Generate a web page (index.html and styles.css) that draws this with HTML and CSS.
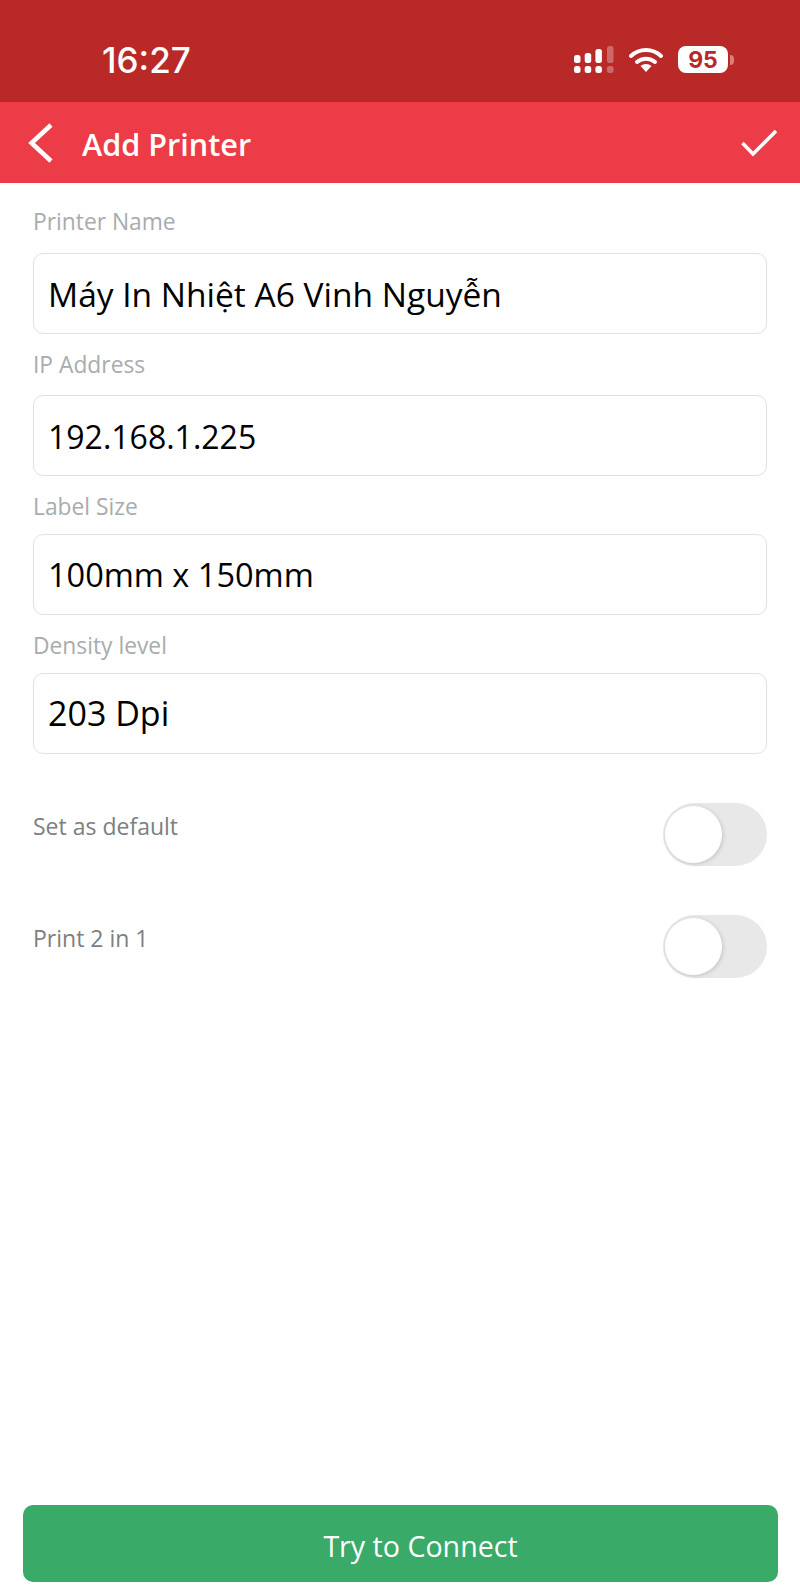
FILE: index.html
```html
<!DOCTYPE html>
<html lang="en">
<head>
    <meta charset="UTF-8">
    <meta name="viewport" content="width=device-width, initial-scale=1.0">
    <title>Add Printer</title>
    <link rel="stylesheet" href="styles.css">
</head>
<body>

    <div class="status-bar">
        <span class="clock">16:27</span>
        <div class="status-icons">
            <svg class="signal" width="40" height="27" viewBox="0 0 40 27">
                <g fill="#fff">
                    <rect x="0" y="9" width="6.500" height="8" rx="2.500"/>
                    <rect x="10.700" y="7" width="6.500" height="10" rx="2.500"/>
                    <rect x="21.400" y="3" width="6.500" height="14" rx="2.500"/>
                    <rect x="0" y="20" width="6.500" height="7" rx="2.500"/>
                    <rect x="10.700" y="20" width="6.500" height="7" rx="2.500"/>
                    <rect x="21.400" y="20" width="6.500" height="7" rx="2.500"/>
                </g>
                <g fill="#fff" opacity="0.3">
                    <rect x="33" y="0" width="6.500" height="17" rx="2.500"/>
                    <rect x="33" y="20" width="6.500" height="7" rx="2.500"/>
                </g>
            </svg>
            <svg class="wifi" width="34" height="26" viewBox="0 0 34 26">
                <path d="M2 9 C10.500 1 23.500 1 32 9" fill="none" stroke="#fff" stroke-width="4" stroke-linecap="round"/>
                <path d="M8 15 C13 10.500 21 10.500 26 15" fill="none" stroke="#fff" stroke-width="4" stroke-linecap="round"/>
                <path d="M11.500 19 C14.500 16.300 19.500 16.300 22.500 19 L17 25 Z" fill="#fff"/>
            </svg>
            <div class="battery">
                <span class="battery-level">95</span>
                <span class="battery-cap"></span>
            </div>
        </div>
    </div>

    <header class="app-bar">
        <svg class="back" width="25" height="40" viewBox="0 0 25 40">
            <path d="M23 2 L3.500 20 L23 38" fill="none" stroke="#fff" stroke-width="4.500"/>
        </svg>
        <h1>Add Printer</h1>
        <svg class="check" width="36" height="28" viewBox="0 0 36 28">
            <path d="M1.500 14 L12 25 L35 2" fill="none" stroke="#fff" stroke-width="3.500"/>
        </svg>
    </header>

    <main class="form">
        <div class="field first">
            <label>Printer Name</label>
            <div class="input">Máy In Nhiệt A6 Vinh Nguyễn</div>
        </div>
        <div class="field second">
            <label>IP Address</label>
            <div class="input numeric">192.168.1.225</div>
        </div>
        <div class="field">
            <label>Label Size</label>
            <div class="input size">100mm x 150mm</div>
        </div>
        <div class="field">
            <label>Density level</label>
            <div class="input density">203 Dpi</div>
        </div>

        <div class="option">
            <span>Set as default</span>
            <div class="toggle"><div class="knob"></div></div>
        </div>
        <div class="option">
            <span>Print 2 in 1</span>
            <div class="toggle"><div class="knob"></div></div>
        </div>
    </main>

    <footer class="actions">
        <button class="connect">Try to Connect</button>
    </footer>

</body>
</html>
```

FILE: styles.css
```css
html, body { height: 100%; }
body { margin: 0; background: #fff; font-family: "Open Sans", "Noto Sans", sans-serif; display: flex; flex-direction: column; }

.status-bar { height: 102px; background: #b82928; display: flex; justify-content: space-between; padding: 40px 66px 0 102px; box-sizing: border-box; color: white; flex-shrink: 0; }
.clock { font-family: Inter, sans-serif; font-size: 35px; font-weight: 500; line-height: 40px; }
.status-icons { display: flex; align-items: flex-start; gap: 15px; margin-top: 6px; }
.wifi { margin-top: 1px; }
.battery { display: flex; align-items: center; gap: 2px; }
.battery-level { width: 50px; height: 27px; background: white; border-radius: 8px; color: #b82928; font-family: Inter, sans-serif; font-size: 23px; font-weight: 700; line-height: 29px; text-align: center; }
.battery-cap { width: 4px; height: 10px; background: #dd7f7d; border-radius: 0 4px 4px 0; }

.app-bar { height: 81px; background: #ec3c47; display: flex; align-items: center; padding: 2px 23px 0 28px; box-sizing: border-box; color: white; flex-shrink: 0; }
.app-bar h1 { margin: 0 0 0 29px; font-size: 30.600px; font-weight: 600; flex: 1; }
.back { margin-top: -1px; }
.check { margin-top: -2px; }

.form { flex: 1; padding: 0 33px; }
.field { padding-top: 16px; }
.field.first { padding-top: 24px; }
.field label { display: block; font-size: 22.800px; line-height: 29px; color: #a8acad; margin-bottom: 13px; }
.field.first label { margin-bottom: 17px; }
.field.second label { margin-bottom: 16px; }
.input { height: 81px; box-sizing: border-box; border: 1px solid #e1e1e1; border-radius: 10px; padding: 0 14px; font-size: 33.500px; line-height: 80px; color: #000; }
.input.numeric { font-size: 32px; line-height: 82px; }
.input.size { font-size: 32.500px; }
.input.density { font-size: 34px; line-height: 78px; }

.option { display: flex; justify-content: space-between; align-items: flex-start; height: 63px; margin-top: 49px; font-size: 23px; color: #7d8080; }
.option span { line-height: 30px; margin-top: 8px; }
.toggle { width: 104px; height: 63px; background: #e8e8e8; border-radius: 32px; }
.knob { width: 57px; height: 57px; margin: 3px 0 0 2px; background: white; border-radius: 50%; box-shadow: 1px 1px 4px rgba(0,0,0,0.16); }

.actions { padding: 0 22px 6px 23px; flex-shrink: 0; }
.connect { display: block; width: 100%; height: 77px; padding: 3px 0 0 40px; border: none; border-radius: 10px; background: #39aa68; color: white; font-family: inherit; font-size: 28.600px; }
```
